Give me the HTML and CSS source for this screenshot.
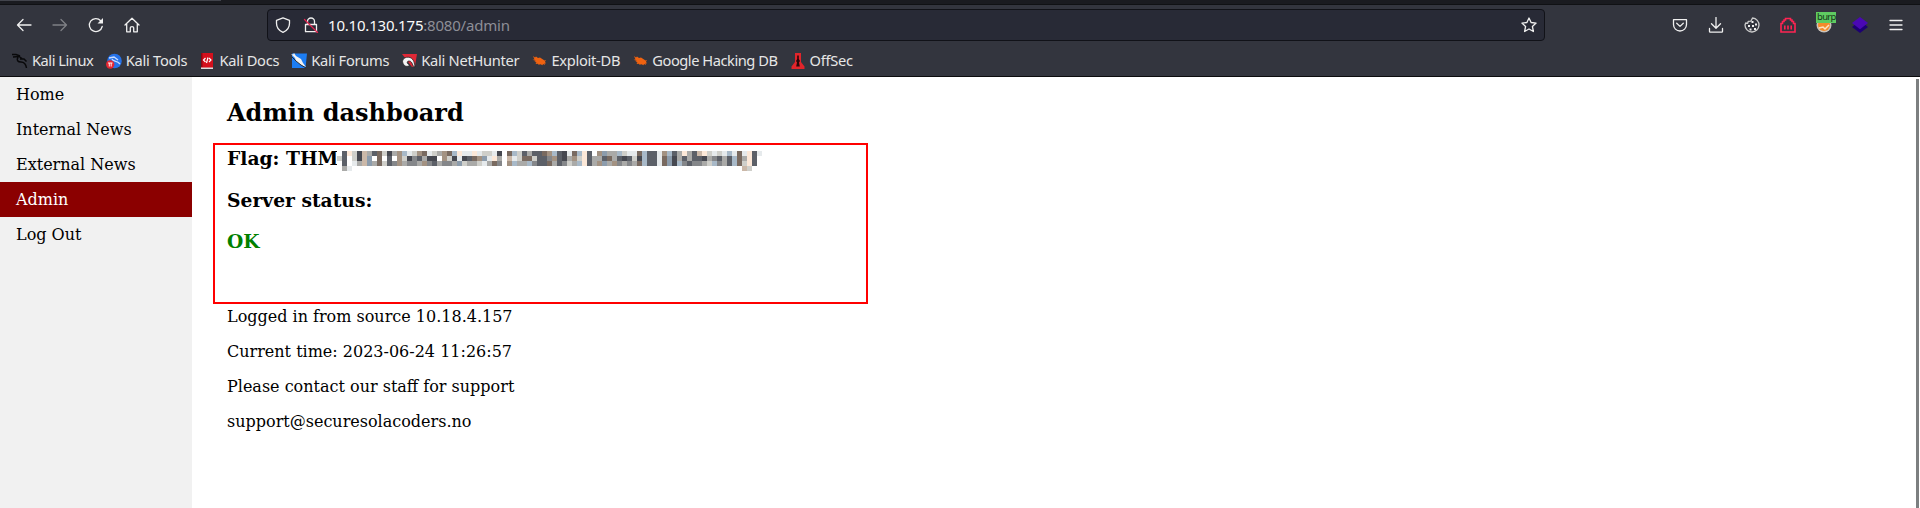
FILE: index.html
```html
<!DOCTYPE html>
<html lang="en">
<head>
<meta charset="utf-8">
<title>Admin dashboard</title>
<link rel="stylesheet" href="styles.css">
</head>
<body>
<header class="browser">
  <div class="tabstrip"><div class="tab"></div></div>
  <div class="toolbar">
    <div class="nav">
      <svg class="ico" viewBox="0 0 16 16"><path d="M15 8H1.500M7 2.500 1.500 8 7 13.500"/></svg>
      <svg class="ico dim" viewBox="0 0 16 16"><path d="M1 8h13.500M9 2.500 14.500 8 9 13.500"/></svg>
      <svg class="ico" viewBox="0 0 16 16"><path d="M14.200 9.500A6.500 6.500 0 1 1 12.700 3.700"/><path class="solid" d="M15 1v5.500H9.500z"/></svg>
      <svg class="ico" viewBox="0 0 16 16"><path d="M1 8 8 1.200 15 8M2.700 7v7.800h3.600v-4q0-1.200 1.700-1.200t1.700 1.200v4h3.600V7"/></svg>
    </div>
    <div class="urlbar">
      <svg class="ico" viewBox="0 0 16 16"><path d="M8 .8 14.500 3.300v3c0 4-2.500 7.500-6.500 9.100C4 13.800 1.500 10.300 1.500 6.300v-3z"/></svg>
      <svg class="ico lock" viewBox="0 0 16 16"><path d="M4.500 7V4.500a3.500 3.500 0 0 1 7 0V7M2.500 7.500h11v7.200h-11z"/><path class="slash" d="m1.500 2.500 13 13"/></svg>
      <span class="url"><b>10.10.130.175</b>:8080/admin</span>
      <svg class="ico star" viewBox="0 0 16 16"><path d="m8 1 2.100 4.500 5 .6-3.700 3.400 1 5L8 12l-4.400 2.500 1-5L.9 6.100l5-.6z"/></svg>
    </div>
    <div class="tools">
      <svg class="ico" viewBox="0 0 16 16"><path d="M1.500 2.700h13v4.800a6.500 6.500 0 0 1-13 0zM4.700 6.300 8 9.400l3.300-3.100"/></svg>
      <svg class="ico" viewBox="0 0 16 16"><path d="M8 .5V11M3.500 6.800 8 11.200l4.500-4.400M1.500 11.500v3q0 .7.700.7h11.600q.7 0 .7-.7v-3"/></svg>
      <svg class="ico cookie" viewBox="0 0 16 16"><path d="M8.500 1A7 7 0 1 1 1 8l.7-2 2 .3.600-2 2.600-.2z"/><path class="solid" d="M7.500 4h2v2h-2zM11 6.500h2v2h-2zM4 8h2v2H4zM8 8h2v2H8zM5.500 11.500h2v2h-2zM10 11h2v2h-2z"/></svg>
      <svg class="ico red" viewBox="0 0 16 16"><path d="M1 15V6.500h1.500v-2H4V3h1.500V1.500h5V3H12v1.500h1.500v2H15V15z"/><path d="M4.800 8.500v4M8 8.500v4M11.200 8.500v4"/></svg>
      <span class="burp">
        <svg viewBox="0 0 16 16"><circle cx="8" cy="8" r="7.500" fill="#c9c3bc"/><circle cx="8" cy="8" r="6" fill="#f58b2a"/><path d="m3 11 4-1 2 2 4-4" fill="none" stroke="#ffe4c0" stroke-width="1.500"/></svg>
        <i>burp</i>
      </span>
      <svg class="ico" viewBox="0 0 16 16"><path fill="#1d0073" stroke="none" d="m0 10 2.500-2h11l2.500 2-8 6z"/><path fill="#4a08b4" stroke="none" d="m8 0 8 6-8 6.200L0 6z"/></svg>
      <svg class="ico menu" viewBox="0 0 16 16"><path d="M2 3.500h12M2 8h12M2 12.500h12"/></svg>
    </div>
  </div>
  <nav class="bookmarks">
    <a class="tight"><svg viewBox="0 0 16 16"><path d="M0 1.500h4l4 1.500M1 4l6-.5 3 2M6 4.500C4 7 6 9 9 9c4 0 5 3 5.500 6M8 6l4 0 2.500 2.500" fill="none" stroke="#08080a" stroke-width="1.500"/></svg>Kali Linux</a>
    <a><svg viewBox="0 0 16 16"><circle cx="8.500" cy="8" r="7.300" fill="#2672e8"/><path d="m3 5 5-1 4 3M6 6c1 3 5 1 8 5" fill="none" stroke="#c9dcff" stroke-width="1.300"/><circle cx="4.200" cy="11.500" r="4.200" fill="#e52631"/><path d="M2 10h4.500M3.300 10v3.500M5.200 10v3.500" stroke="#fff" stroke-width=".9"/></svg>Kali Tools</a>
    <a><svg viewBox="0 0 16 16"><path d="M2 0h12v16H2z" fill="#d4101c"/><path d="M2 0h1.500v14H2z" fill="#8d0712"/><path d="M2 14.500h12v1.500H2z" fill="#ddd"/><path d="M6.500 5 4.500 7l2 2M10 5l2 2-2 2M9 4.500 7.500 10" fill="none" stroke="#fff" stroke-width="1.200"/></svg>Kali Docs</a>
    <a><svg viewBox="0 0 16 16"><path d="M1 .5h15L14.500 15H1z" fill="#1d7df2"/><path d="m0 1 2 .5L3 0l2 3 5 3 2 4 3 4-5-2-5-4-1-3z" fill="#f2f2f2"/><path d="m1 4 4 4 5 4 5 3" fill="none" stroke="#222" stroke-width=".9"/></svg>Kali Forums</a>
    <a><svg viewBox="0 0 16 16"><path d="M1 1h15l-2 12-3 1z" fill="#e02836"/><path d="M3 12C-1 7 4 3 9 4.500c4 1.500 4.500 6 5 9.500-3 0-2-6-6-6-2.500 0-2.500 3 1 4-2 2-5 1.500-6 0" fill="#f5f5f5" stroke="#222" stroke-width=".8"/></svg>Kali NetHunter</a>
    <a><svg viewBox="0 0 16 16"><path d="m2 3 2 1.500 1-1L7 5l2-.5 3 2 1.500 1L15 7l-1 1.700 1 1.800-1.500-.2.500 1.700-2-1-.5 1.300-2-1-2 .5-.5-1-2.500.2 1-1.500-2-.7L5 8 1.500 6.700l2-.3z" fill="#ef6210"/></svg>Exploit-DB</a>
    <a class="tight"><svg viewBox="0 0 16 16"><path d="m2 3 2 1.500 1-1L7 5l2-.5 3 2 1.500 1L15 7l-1 1.700 1 1.800-1.500-.2.500 1.700-2-1-.5 1.300-2-1-2 .5-.5-1-2.500.2 1-1.500-2-.7L5 8 1.500 6.700l2-.3z" fill="#ef6210"/></svg>Google Hacking DB</a>
    <a><svg viewBox="0 0 16 16"><path d="M5 0h6v9l3.500 4.500V16h-13v-2.500L5 9z" fill="#e1252b"/><path d="M7.200 2.500h1.600V6l1.200 2-1 1.500.8 4H6.200l.8-4L6 8l1.200-2z" fill="#270609"/></svg>OffSec</a>
  </nav>
</header>
<div class="page">
  <aside class="sidebar">
    <a>Home</a><a>Internal News</a><a>External News</a><a class="active">Admin</a><a>Log Out</a>
  </aside>
  <main class="content">
    <h2>Admin dashboard</h2>
    <section class="status">
      <h3 class="flag">Flag: THM<svg id="mosaic" class="mosaic" viewBox="0 0 85 4" shape-rendering="crispEdges"></svg></h3>
      <h3>Server status:</h3>
      <h3 class="ok">OK</h3>
    </section>
    <p>Logged in from source 10.18.4.157</p>
    <p>Current time: 2023-06-24 11:26:57</p>
    <p>Please contact our staff for support</p>
    <p>support@securesolacoders.no</p>
  </main>
  <div class="scrollbar"></div>
</div>
<script src="mosaic.js"></script>
</body>
</html>
```
FILE: styles.css
```css
* { box-sizing: border-box; }
body { margin: 0; height: 508px; overflow: hidden; display: flex; flex-direction: column; background: #fff; font: 16px/19px "DejaVu Serif", serif; color: #000; }
.browser { height: 77px; flex: none; background: #33353e; border-bottom: 1px solid #0c0c0e; font-family: "Noto Sans", sans-serif; color: #e6e6e6; }
.tabstrip { height: 5px; background: #1a1b20; border-bottom: 1px solid #101114; }
.tab { width: 221px; height: 1px; background: #42444c; }
.toolbar { height: 40px; display: flex; align-items: center; }
.ico { width: 16px; height: 16px; flex: none; fill: none; stroke: #f0f0f0; stroke-width: 1.3; stroke-linejoin: round; stroke-linecap: round; }
.ico .solid { fill: #f0f0f0; stroke: none; }
.dim { opacity: .4; }
.nav { width: 267px; padding-left: 16px; display: flex; gap: 20px; }
.urlbar { width: 1278px; height: 32px; display: flex; align-items: center; padding: 0 7px; background: #282a36; border: 1px solid #111218; border-radius: 4px; }
.lock { margin: 0 9px 0 12px; }
.lock .slash { stroke: #e0234e; }
.url { flex: 1; font-size: 15px; letter-spacing: -.2px; color: #8d8e96; }
.url b { font-weight: 400; color: #fafafa; }
.tools { flex: 1; display: flex; gap: 20px; padding-left: 127px; }
.red { stroke: #ff2453; stroke-width: 1.6; stroke-linejoin: miter; stroke-linecap: butt; }
.cookie { stroke: #ccc; }
.burp { width: 16px; height: 16px; position: relative; }
.burp svg { display: block; width: 16px; height: 16px; }
.burp i { position: absolute; left: 0; top: -5px; width: 20px; height: 11px; padding-left: 1px; background: #5fcb61; color: #153818; font: 9.5px/10px "Noto Sans", sans-serif; letter-spacing: -.7px; }
.bookmarks { height: 31px; padding-left: 12px; display: flex; align-items: center; font-size: 14.67px; letter-spacing: -.28px; }
.bookmarks a { display: flex; align-items: center; gap: 4px; margin-right: 12.1px; white-space: nowrap; }
.bookmarks .tight { letter-spacing: -.47px; }
.bookmarks .tight:first-child { margin-right: 12.5px; }
.bookmarks svg { width: 16px; height: 16px; flex: none; }
.page { flex: 1; display: flex; }
.sidebar { width: 192px; background: #f1f1f1; }
.sidebar a { display: block; height: 35px; padding: 8px 16px; }
.sidebar .active { background: #8b0000; color: #fff; }
.content { flex: 1; padding: 22px 0 0 21px; }
h2 { margin: 0 0 16px 14px; font-size: 24px; line-height: 28px; }
.status { width: 655px; height: 161px; border: 2px solid #f00; padding: 2px 0 0 12px; }
h3 { margin: 0 0 19px; height: 22px; font-size: 18.72px; line-height: 22px; display: flex; }
.flag { margin-bottom: 20px; }
.mosaic { width: 425px; height: 20px; margin: 4px 0 0 -1px; flex: none; }
.ok { color: green; }
p { margin: 0 0 16px 14px; }
.status + p { margin-top: 3px; }
.scrollbar { width: 3px; margin: 2px 1px 0 0; background: #7c7f80; }
```
FILE: mosaic.js
```js
// Pixelated cover for the secret part of the flag.
const palette = { w: '#ffffff', a: '#e6eaec', l: '#cfcfca', g: '#aaaaa8', m: '#85878a', d: '#5c6068', k: '#464850', t: '#796a60', s: '#a39282', b: '#8c9cac', c: '#a8b9c8', p: '#cbb8a8', f: '#fce8d8' };
const rows = [
  'wdflkpgdtlkgscalstalgstcfaafallakwtcldgddtscdkatcfdwsbggclaatcddascdgfgdpflalacatafda',
  'ldwlkpbwtwdwslkmdgkkwslkakdtsbafgwpalttlddmsdkgslfdggdtgdkdlkcddatbkgdgddkgmdgdctgfdw',
  'wdwagpbgtldmsgmmgsmdgmmgblgglagtmwscggcmddtgdmlgcfdgsbgsmgmgtcddatbkcmdmmglcmgdctlfdw',
  'wgawwwwwwwwwwwwwwwwwwwwwwwwwwwwwwwwwwwwwwwwwwwwwwwwwwwwwwwwwwwwwwwwwwwwwwwwwwwwwwplw'
];
const svg = document.getElementById('mosaic');
rows.forEach((row, y) => [...row].slice(0, 85).forEach((key, x) => {
  const cell = document.createElementNS('http://www.w3.org/2000/svg', 'rect');
  cell.setAttribute('x', x);
  cell.setAttribute('y', y);
  cell.setAttribute('width', 1);
  cell.setAttribute('height', 1);
  cell.setAttribute('fill', palette[key]);
  svg.append(cell);
}));
```
